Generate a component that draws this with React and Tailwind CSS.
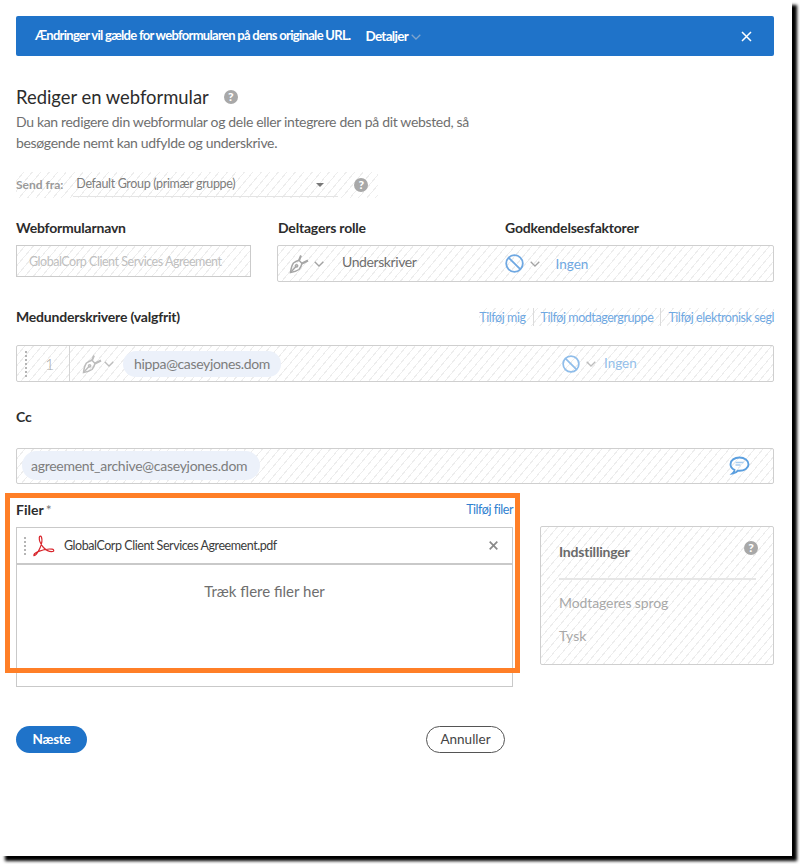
const HATCH = "bg-[repeating-linear-gradient(130deg,transparent_0_5.500px,#ededed_5.500px_6.500px)]";
const F = { fontFamily: '"Lato", "Noto Sans", sans-serif' };

function Help({ className = "" }) {
  return (
    <span className={"flex h-[14px] w-[14px] shrink-0 items-center justify-center rounded-full bg-[#a8a8a8] text-[12px] font-black leading-none text-white " + className}>?</span>
  );
}
function Chevron({ className = "", color = "#a3a3a3" }) {
  return (
    <svg className={className} width="10" height="6" viewBox="0 0 10 6" fill="none" stroke={color} strokeWidth="1.300">
      <path d="M0.7 0.7 5 5 9.300 0.7" />
    </svg>
  );
}
function Ban({ size = 19, color = "#6fa8e2" }) {
  return (
    <svg width={size} height={size} viewBox="0 0 19 19" fill="none" stroke={color} strokeWidth="1.800" className="shrink-0">
      <circle cx="9.500" cy="9.500" r="8.300" />
      <path d="M3.800 3.800 15.200 15.200" />
    </svg>
  );
}
function Pen({ color = "#a6a6a6" }) {
  return (
    <svg width="20" height="20" viewBox="0 0 20 20" fill="none" stroke={color} strokeWidth="1.500" className="shrink-0">
      <path d="M1.500 18.500c.5-4 1-7 3-9.500 2-1.500 4-2.200 5.500-2.700l3 3.200c-.5 2-1.200 4-3 6-2.600 1.800-5 2.500-8.500 3z" />
      <path d="M1.500 18.500 7 12.500" />
      <circle cx="7.600" cy="11.800" r="1.100" />
      <path d="M10 6.300 12 1.500M13 9.500 19 6.500" strokeWidth="2" />
    </svg>
  );
}
function Pdf() {
  return (
    <svg width="23" height="22" viewBox="0 0 23 22" fill="none" stroke="#d8232a" strokeWidth="1.200" className="shrink-0">
      <path d="M1.500 20.500c1.500.8 4-2 6.500-7.500 1.500-3.500 2.500-8 1.500-10.800-.5-1.400-2-1.400-2.200.2-.3 3 1.500 7 4.200 10.100 2.800 2.800 6.500 4.500 9.300 4 1.500-.4 1.200-2-.6-2.300-3.700-.5-9.700.5-14.200 2.400-2.300 1-4.500 2.500-4 3.900z" />
    </svg>
  );
}
function Chat() {
  return (
    <svg width="21" height="20" viewBox="0 0 21 20" fill="none" className="shrink-0">
      <path d="M10.500 1.500c-5 0-9 2.800-9 6.700 0 2.500 1.500 4.500 4 5.700-.2 1.500-1 2.800-2 3.600 2.200-.2 4.200-1.200 5.500-2.800.5.100 1 .1 1.500.1 5 0 9-2.800 9-6.600s-4-6.700-9-6.700z" stroke="#5b9fdf" strokeWidth="1.900" />
      <path d="M6.500 6.500h8M6.500 9h5" stroke="#a9cdf0" strokeWidth="1.500" />
    </svg>
  );
}
function Label({ children, className = "" }) {
  return <div className={"h-5 text-[14px] font-bold leading-5 tracking-[-0.2px] text-[#2c2c2c] " + className}>{children}</div>;
}
function Dots({ className = "" }) {
  return <div className={"w-0 border-l-2 border-dotted border-[#b5b5b5] " + className} />;
}

export default function App() {
  return (
    <div className="h-[864px] w-[800px] bg-white">
      <div style={F} className="relative h-[856px] w-[792px] bg-white px-4 pt-4 shadow-[5px_5px_3px_#000]">
        <div className="w-[758px]">
          {/* Banner */}
          <div className="flex h-10 items-center rounded-[2px] bg-[#1f73c9] pl-[19px] pr-[22px] text-white">
            <span className="whitespace-nowrap text-[13px] font-bold tracking-[-0.7px]">Ændringer vil gælde for webformularen på dens originale URL.</span>
            <span className="ml-[15px] text-[13.500px] font-bold tracking-[-0.68px]">Detaljer</span>
            <Chevron className="ml-[3px] mt-[2px]" color="#7ea3cc" />
            <svg className="ml-auto" width="11" height="11" viewBox="0 0 11 11" stroke="#fff" strokeWidth="1.500"><path d="M1 1l9 9M10 1l-9 9" /></svg>
          </div>

          {/* Heading */}
          <div className="mt-[29px] flex h-6 items-center">
            <h1 className="text-[18.400px] font-normal leading-6 text-[#2c2c2c]">Rediger en webformular</h1>
            <Help className="ml-[15px]" />
          </div>
          <p className="mt-[2px] w-[470px] text-[14px] leading-[21px] tracking-[-0.33px] text-[#6f6f6f]">
            Du kan redigere din webformular og dele eller integrere den på dit websted, så besøgende nemt kan udfylde og underskrive.
          </p>

          {/* Send fra */}
          <div className={"mt-[19px] flex h-[26px] w-[362px] items-center " + HATCH}>
            <span className="text-[12px] font-bold text-[#9a9a9a]">Send fra:</span>
            <div className="ml-[10px] flex h-[24px] w-[265px] items-center border-b border-[#e4e4e4] pl-[3px]">
              <span className="text-[12.500px] tracking-[-0.35px] text-[#7d7d7d]">Default Group (primær gruppe)</span>
              <span className="ml-auto mr-[14px] h-0 w-0 border-x-[4px] border-t-[4px] border-x-transparent border-t-[#777]" />
            </div>
            <Help className="ml-[16px]" />
          </div>

          {/* Name + role */}
          <div className="mt-5 flex items-start">
            <div className="w-[235px] shrink-0">
              <Label>Webformularnavn</Label>
              <div className={"mt-[7px] flex h-[32px] items-center border border-[#cbcbcb] pl-[12px] " + HATCH}>
                <span className="mt-[2px] whitespace-nowrap text-[12.500px] tracking-[-0.47px] text-[#c0c0c0]">GlobalCorp Client Services Agreement</span>
              </div>
            </div>
            <div className="ml-[27px] flex-1">
              <div className="flex">
                <Label className="w-[227px]">Deltagers rolle</Label>
                <Label>Godkendelsesfaktorer</Label>
              </div>
              <div className={"mt-[7px] flex h-[37px] -ml-px items-center rounded-[2px] border border-[#cfcfcf] pl-[11px] " + HATCH}>
                <Pen />
                <Chevron className="ml-[5px]" />
                <span className="mb-[4px] ml-[18px] text-[14px] tracking-[-0.4px] text-[#6e6e6e]">Underskriver</span>
                <div className="ml-[88px] flex items-center">
                  <Ban />
                  <Chevron className="ml-[6px]" />
                  <span className="ml-[16px] mt-[2px] text-[13.500px] text-[#6fa8e2]">Ingen</span>
                </div>
              </div>
            </div>
          </div>

          {/* Medunderskrivere */}
          <div className="mt-[25px] flex h-5 items-center justify-between">
            <Label>Medunderskrivere (valgfrit)</Label>
            <div className={"flex h-[18px] items-center text-[12.500px] tracking-[-0.43px] text-[#6fa8e2] " + HATCH}>
              <span className="mt-[3px]">Tilføj mig</span>
              <span className="mx-[7px] h-[18px] w-px bg-[#dcdcdc]" />
              <span className="mt-[3px]">Tilføj modtagergruppe</span>
              <span className="mx-[7px] h-[18px] w-px bg-[#dcdcdc]" />
              <span className="mt-[3px]">Tilføj elektronisk segl</span>
            </div>
          </div>
          <div className={"mt-[18px] flex h-[37px] items-center rounded-[2px] border border-[#cfcfcf] " + HATCH}>
            <Dots className="ml-[8px] h-[26px]" />
            <span className="ml-[18px] w-[24px] text-[16px] font-light text-[#a9a9a9]">1</span>
            <span className="h-full w-px bg-[#d5d5d5]" />
            <div className="ml-[12px]"><Pen color="#bdbdbd" /></div>
            <Chevron className="ml-[2px]" color="#bdbdbd" />
            <span className="ml-[9px] flex h-[26px] w-[158px] items-center justify-center rounded-full bg-[#ecf1fa] text-[14px] tracking-[-0.35px] text-[#7d7d7d]">hippa@caseyjones.dom</span>
            <div className="ml-[281px] flex items-center">
              <Ban size={18} color="#8fbdea" />
              <Chevron className="ml-[6px]" color="#bdbdbd" />
              <span className="ml-[8px] text-[13.500px] text-[#94bfea]">Ingen</span>
            </div>
          </div>

          {/* Cc */}
          <Label className="mt-[25px]">Cc</Label>
          <div className={"mt-[21px] flex h-[36px] items-center rounded-[2px] border border-[#cfcfcf] pl-[5px] pr-[23px] " + HATCH}>
            <span className="mb-px flex h-[29px] w-[238px] items-center justify-start rounded-full bg-[#ecf1fa] pl-[9px] text-[14px] tracking-[-0.27px] text-[#7d7d7d]">agreement_archive@caseyjones.dom</span>
            <div className="ml-auto"><Chat /></div>
          </div>

          {/* Files + settings */}
          <div className="mt-4 flex items-start">
            <div className="w-[497px] shrink-0">
              <div className="flex h-5 items-center justify-between">
                <div className="text-[14px] font-bold leading-5 text-[#2c2c2c]">Filer<span className="ml-[2px] font-normal text-[#777]">*</span></div>
                <span className="mt-px text-[12.500px] tracking-[-0.45px] text-[#2f7fd0]">Tilføj filer</span>
              </div>
              <div className="mt-[7px] h-[160px] border border-[#c9c9c9]">
                <div className="flex h-[37px] items-center border-b-2 border-[#c9c9c9] pl-[7px] pr-[14px]">
                  <Dots className="h-[18px]" />
                  <div className="ml-[6px]"><Pdf /></div>
                  <span className="ml-[9px] mt-[2px] text-[12.500px] tracking-[-0.45px] text-[#3c3c3c]">GlobalCorp Client Services Agreement.pdf</span>
                  <svg className="ml-auto" width="9" height="9" viewBox="0 0 9 9" stroke="#8a8a8a" strokeWidth="1.700"><path d="M.7.7l7.600 7.600M8.300.7 .7 8.300" /></svg>
                </div>
                <div className="pt-[15px] text-center text-[15px] leading-[22px] text-[#6e6e6e]">Træk flere filer her</div>
              </div>
            </div>
            <div className={"ml-[27px] mt-[26px] h-[139px] w-[234px] rounded-[2px] border border-[#cfcfcf] pl-[18px] pr-[17px] " + HATCH}>
              <div className="flex h-[53px] items-start justify-between border-b-2 border-[#e6e6e6]">
                <span className="mt-[15px] text-[14px] font-bold leading-5 tracking-[-0.2px] text-[#6a6a6a]">Indstillinger</span>
                <Help className="-mr-[2px] mt-[14px]" />
              </div>
              <div className="mt-[13px] text-[14px] leading-5 tracking-[-0.1px] text-[#a8a8a8]">Modtageres sprog</div>
              <div className="mt-[13px] text-[14px] leading-5 text-[#a8a8a8]">Tysk</div>
            </div>
          </div>

          {/* Buttons */}
          <div className="mt-[39px] flex w-[489px] justify-between">
            <button className="h-[27px] w-[71px] rounded-full bg-[#1f73c9] text-[13.500px] font-bold tracking-[-0.3px] text-white">Næste</button>
            <button className="h-[27px] w-[79px] rounded-full border border-[#555] bg-white text-[13.500px] text-[#444]">Annuller</button>
          </div>
        </div>

        {/* Highlight annotation */}
        <div className="pointer-events-none absolute left-[5px] top-[493px] h-[180px] w-[515px] border-[5px] border-[#ff7f27]" />
      </div>
    </div>
  );
}
